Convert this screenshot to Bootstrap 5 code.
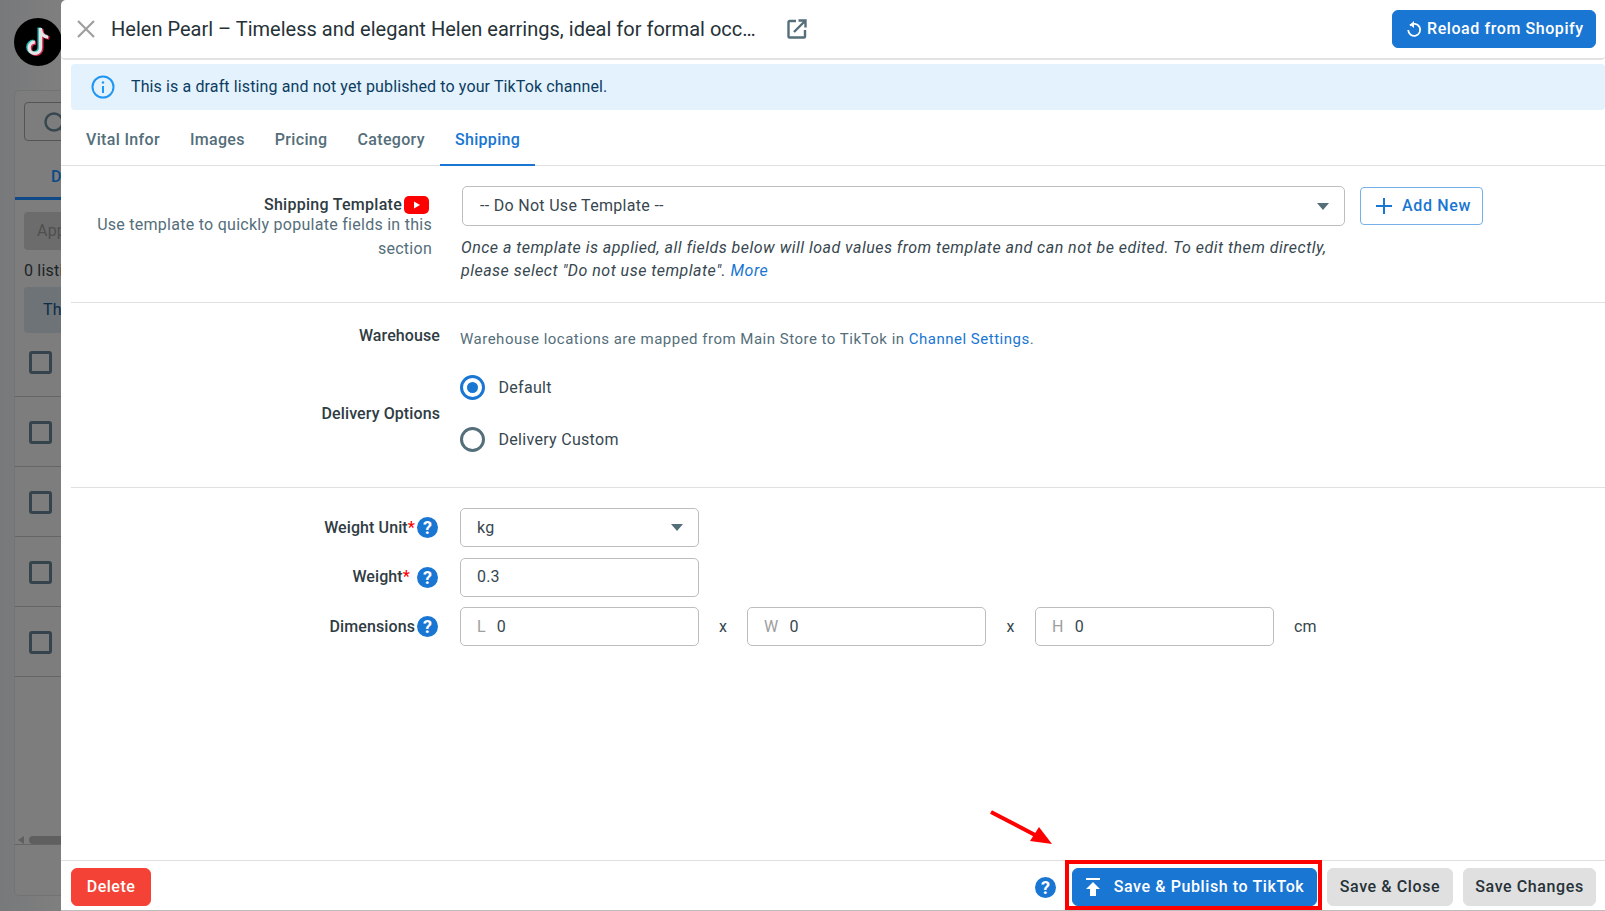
<!doctype html>
<html lang="en">
<head>
<meta charset="utf-8">
<title>Shipping</title>
<link href="https://cdn.jsdelivr.net/npm/bootstrap@5.3.0/dist/css/bootstrap.min.css" rel="stylesheet">
<style>
html,body{height:911px;overflow:hidden}
body{font-family:Roboto,"Liberation Sans",sans-serif;font-size:16px;letter-spacing:.2px;color:#263238;background:#7e7e7e}
.shell{height:911px}
.backdrop{width:61px;flex:none;overflow:hidden;background:linear-gradient(90deg,#77797a,#7f7f7f)}
.tk-logo{width:48px;height:48px;margin:18px 0 24px 14px;background:#000;border-radius:50%}
.tk-logo svg{width:38px;height:38px}
.under-card{margin-left:14px;width:70px;height:806px;background:#7d7d7d;border:1px solid #737373;border-radius:5px;color:#1b2327}
.under-search{margin:11px 0 0 9px;height:39px;border:1px solid #545454;border-radius:4px;padding:8px 0 0 18px}
.under-search svg{width:26px;height:26px}
.under-tab{height:59px;color:#0d4a86;font-weight:500;padding:24px 0 0 36px;border-bottom:3px solid #0e4a87}
.under-btn{margin:12px 0 0 9px;height:38px;background:#6c6c6c;color:#4f4f4f;border-radius:4px;padding:7px 0 0 13px}
.under-count{margin:9px 0 0 9px;height:28px;white-space:nowrap}
.under-alert{margin:0 0 0 9px;height:46px;background:#6d7376;color:#0d2c48;border-radius:4px;padding:11px 0 0 19px}
.under-row{height:70px;border-bottom:1px solid #656565;padding:24px 0 0 14px}
.under-row.lead-row{height:64px;padding-top:18px}
.under-check{width:23px;height:23px;border:3px solid #35444c;border-radius:3px}
.under-scroll{margin-top:158px;height:10px;border-bottom:1px solid #656565;padding-left:3px}
.under-scroll::before{content:"";border-top:4px solid transparent;border-bottom:4px solid transparent;border-right:6px solid #5f5f5f;margin-right:5px}
.under-thumb{height:8px;flex:1;background:#5f5f5f;border-radius:4px 0 0 4px}
.modal-pane{min-width:0;background:#fff;border-radius:5px 0 0 0}
.top-bar{height:60px;flex:none;padding:0 9px 0 15px;border-bottom:2px solid #e3e3e3;border-radius:0 0 4px 4px}
.close-x{width:20px;height:20px;margin-right:15px}
.listing-title{width:646px;font-size:20px;letter-spacing:.01px;color:#263238}
.open-ext{width:20px;height:20px;margin-left:30px;margin-right:auto}
.btn-blue{--bs-btn-bg:#1976d2;--bs-btn-border-color:#1976d2;--bs-btn-color:#fff;--bs-btn-hover-bg:#1976d2;--bs-btn-hover-color:#fff;--bs-btn-font-weight:500;--bs-btn-font-size:16px;--bs-btn-padding-y:0;height:38px}
.reload-btn{width:204px;padding:0 0 0 12px;letter-spacing:.58px}
.reload-btn svg{width:18px;height:18px;margin-right:4px}
.draft-note{height:46px;margin:4px 0 0 10px;padding:0 0 0 20px;background:#e3f2fd;color:#0d3c61;border-radius:4px;letter-spacing:.12px}
.draft-note svg{width:24px;height:24px;margin-right:16px}
.tab-strip{height:56px;padding-left:10px;border-bottom:1px solid #e0e0e0;flex:none}
.tab-strip a{padding:0 15px;height:56px;line-height:59px;color:#546e7a;font-weight:500;text-decoration:none;letter-spacing:.33px}
.tab-strip a.on{color:#1976d2;border-bottom:2px solid #1976d2}
.sec-one{margin-left:10px;height:137px;border-bottom:1px solid #e0e0e0;padding-top:20px}
.lab-wide{width:361px;margin-right:30px;flex:none;text-align:right;color:#546e7a;line-height:23.5px;padding-top:11px;letter-spacing:.27px}
.lab-wide strong{font-weight:500;color:#2f3c43;display:flex;justify-content:flex-end;align-items:center;height:16px;letter-spacing:.27px}
.lab-wide svg{width:25px;height:18px;margin-left:2px;margin-right:3px}
.pick{height:40px;border:1px solid #bdbdbd;border-radius:5px;padding:0 17px;display:flex;align-items:center;justify-content:space-between;color:#37474f;letter-spacing:.3px}
.pick::after{content:"";border-left:6.500px solid transparent;border-right:6.500px solid transparent;border-top:7px solid #546e7a;margin-right:-2px}
.pick-wide{width:883px}
.add-btn{width:123px;height:38px;margin:1px 0 0 15px;border:1px solid #75b0e8;border-radius:4px;background:#fff;color:#1976d2;font-weight:500;padding:0 0 0 4px;letter-spacing:.64px}
.add-btn svg{width:16px;height:16px;margin-right:10px}
.hint-it{width:880px;font-style:italic;color:#37474f;line-height:23px;margin:10px 0 0 -1px;letter-spacing:.48px}
a.lnk{color:#1976d2;text-decoration:none}
.sec-two{margin-left:10px;height:185px;border-bottom:1px solid #e0e0e0}
.lab-col{width:369px;margin-right:20px;flex:none;text-align:right;font-weight:500;color:#2f3c43;letter-spacing:.1px}
.wh-line{padding-top:21px;height:72px}
.wh-note{font-size:15px;color:#546e7a;padding-top:4px;letter-spacing:.5px}
.deliv{height:112px}
.deliv-lab{padding-bottom:34px}
.radio-set{gap:27px;margin-left:-.5px}
.radio-line{height:25px;color:#37474f;letter-spacing:.3px}
.fake-radio{width:25px;height:25px;border-radius:50%;border:3px solid #546e7a;margin-right:14px;flex:none;background:#fff}
.fake-radio.sel{border-color:#1976d2;padding:4px}
.fake-radio.sel i{display:block;width:11px;height:11px;border-radius:50%;background:#1976d2}
.form-zone{margin-left:10px;padding-top:20px;gap:10.5px}
.fld-line{height:39px}
.lab-form{display:flex;justify-content:flex-end;align-items:center;gap:2px;width:367px;margin-right:22px}
.req{color:#f00}
.qmark{width:21px;height:21px;border-radius:50%;background:#1976d2;color:#fff;font-weight:700;font-size:18px;line-height:21px;text-align:center;letter-spacing:0;flex:none;display:inline-block}
.gap-m{margin-left:5px}
.fld{width:239px;height:39px;border:1px solid #bdbdbd;border-radius:5px;padding:0 16px;display:flex;align-items:center;color:#37474f;letter-spacing:.2px}
.fld.pick{justify-content:space-between}
.fld.pick::after{margin-right:-1px}
.fld .pre{color:#9e9e9e;margin-right:11px}
.times{width:48px;text-align:center;color:#37474f;padding-top:1px}
.times.wider{width:49px}
.unit-cm{margin-left:20px;color:#37474f;padding-top:1px}
.foot-bar{height:50px;flex:none;padding:3px 9px 0 10px;border-top:1px solid #e0e0e0;margin-top:auto}
.del-btn{--bs-btn-bg:#f44336;--bs-btn-border-color:#f44336;--bs-btn-color:#fff;--bs-btn-hover-bg:#f44336;--bs-btn-hover-color:#fff;--bs-btn-font-weight:500;--bs-btn-font-size:16px;--bs-btn-padding-y:0;width:80px;height:38px;letter-spacing:.5px}
.grey-btn{--bs-btn-bg:#e0e0e0;--bs-btn-border-color:#e0e0e0;--bs-btn-color:#263238;--bs-btn-hover-bg:#e0e0e0;--bs-btn-font-weight:500;--bs-btn-font-size:16px;--bs-btn-padding-y:0;--bs-btn-padding-x:0;height:38px;letter-spacing:.6px}
.grey-close{width:126px;margin-right:10px}
.grey-save{width:133px}
.pub-btn{width:245px;padding:0;letter-spacing:.6px}
.pub-btn svg{width:16px;height:18px;margin-right:13px}
.pub-wrap{position:relative;margin:0 10px 0 16px}
.pub-wrap::before{content:"";position:absolute;left:-7px;right:-5px;top:-8px;bottom:-4px;border:4px solid #f00;pointer-events:none}
.pointer{position:absolute;left:-82px;top:-57px;width:62px;height:34px;overflow:visible}
.bot-line{height:1px;background:#bdbdbd}
</style>
</head>
<body>
<div class="shell d-flex">
  <div class="backdrop">
    <div class="tk-logo d-flex align-items-center justify-content-center">
      <svg viewBox="0 0 30 30" aria-hidden="true">
        <path d="M17 4v15.500a4.500 4.500 0 1 1-4.500-4.500M17 5c.4 3.600 2.600 5.800 6 6.200" fill="none" stroke="#20b8b3" stroke-width="2.800" transform="translate(-1 -.5)"/>
        <path d="M17 4v15.500a4.500 4.500 0 1 1-4.500-4.500M17 5c.4 3.600 2.600 5.800 6 6.200" fill="none" stroke="#d02850" stroke-width="2.800" transform="translate(1 .7)"/>
        <path d="M17 4v15.500a4.500 4.500 0 1 1-4.500-4.500M17 5c.4 3.600 2.600 5.800 6 6.200" fill="none" stroke="#e4e4e4" stroke-width="2.600"/>
      </svg>
    </div>
    <div class="under-card">
      <div class="under-search"><svg viewBox="0 0 26 26" fill="none" stroke="#37474f" stroke-width="2.500"><circle cx="11" cy="11" r="8.500"/><path d="M17 17l7 7"/></svg></div>
      <div class="under-tab">D</div>
      <div class="under-btn">App</div>
      <div class="under-count">0 listings</div>
      <div class="under-alert">Th</div>
      <div class="under-row lead-row"><div class="under-check"></div></div>
      <div class="under-row"><div class="under-check"></div></div>
      <div class="under-row"><div class="under-check"></div></div>
      <div class="under-row"><div class="under-check"></div></div>
      <div class="under-row"><div class="under-check"></div></div>
      <div class="under-scroll d-flex align-items-center"><div class="under-thumb"></div></div>
    </div>
  </div>

  <div class="modal-pane flex-grow-1 d-flex flex-column">
    <div class="top-bar d-flex align-items-center">
      <svg class="close-x" viewBox="0 0 20 20" fill="none" stroke="#9e9e9e" stroke-width="2.200"><path d="M2 2l16 16M18 2L2 18"/></svg>
      <div class="listing-title text-truncate">Helen Pearl – Timeless and elegant Helen earrings, ideal for formal occasions</div>
      <svg class="open-ext" viewBox="0 0 20 20" fill="none" stroke="#546e7a" stroke-width="2.400"><path d="M9 2H2.500a1 1 0 0 0-1 1v14.500a1 1 0 0 0 1 1H17a1 1 0 0 0 1-1V11M7 13L18 2M11.500 1.500H18.500V8.500"/></svg>
      <button type="button" class="btn btn-blue reload-btn d-flex align-items-center">
        <svg viewBox="0 0 18 18" fill="none" stroke="#fff" stroke-width="1.800"><path d="M5 5.500A6 6 0 1 1 3.200 10"/><path d="M9 1L5 4.700 9 8z" fill="#fff" stroke="none"/></svg>Reload from Shopify
      </button>
    </div>

    <div class="draft-note d-flex align-items-center">
      <svg viewBox="0 0 24 24" fill="none" stroke="#2196f3" stroke-width="2"><circle cx="12" cy="12" r="10.500"/><path d="M12 11v7"/><circle cx="12" cy="7.500" r="1.200" fill="#2196f3" stroke="none"/></svg>
      <span>This is a draft listing and not yet published to your TikTok channel.</span>
    </div>

    <nav class="tab-strip d-flex">
      <a href="#">Vital Infor</a><a href="#">Images</a><a href="#">Pricing</a><a href="#">Category</a><a href="#" class="on">Shipping</a>
    </nav>

    <section class="sec-one d-flex">
      <div class="lab-wide">
        <strong>Shipping Template<svg viewBox="0 0 25 18"><rect width="25" height="18" rx="5" fill="#f00"/><path d="M10 5.500l6 3.500-6 3.500z" fill="#fff"/></svg></strong>
        Use template to quickly populate fields in this section
      </div>
      <div>
        <div class="d-flex">
          <div class="pick pick-wide">-- Do Not Use Template --</div>
          <button type="button" class="add-btn d-flex align-items-center justify-content-center">
            <svg viewBox="0 0 16 16" stroke="#1976d2" stroke-width="2"><path d="M8 0v16M0 8h16"/></svg>Add New
          </button>
        </div>
        <div class="hint-it">Once a template is applied, all fields below will load values from template and can not be edited. To edit them directly, please select "Do not use template". <a href="#" class="lnk">More</a></div>
      </div>
    </section>

    <section class="sec-two">
      <div class="d-flex wh-line">
        <div class="lab-col">Warehouse</div>
        <div class="wh-note">Warehouse locations are mapped from Main Store to TikTok in <a href="#" class="lnk">Channel Settings</a>.</div>
      </div>
      <div class="d-flex deliv">
        <div class="lab-col align-self-center deliv-lab">Delivery Options</div>
        <div class="d-flex flex-column radio-set">
          <div class="radio-line d-flex align-items-center"><span class="fake-radio sel"><i></i></span>Default</div>
          <div class="radio-line d-flex align-items-center"><span class="fake-radio"></span>Delivery Custom</div>
        </div>
      </div>
    </section>

    <section class="form-zone d-flex flex-column">
      <div class="d-flex align-items-center fld-line">
        <div class="lab-col lab-form"><span>Weight Unit<span class="req">*</span></span><span class="qmark">?</span></div>
        <div class="fld pick">kg</div>
      </div>
      <div class="d-flex align-items-center fld-line">
        <div class="lab-col lab-form"><span>Weight<span class="req">*</span></span><span class="qmark gap-m">?</span></div>
        <div class="fld">0.3</div>
      </div>
      <div class="d-flex align-items-center fld-line">
        <div class="lab-col lab-form"><span>Dimensions</span><span class="qmark">?</span></div>
        <div class="fld"><span class="pre">L</span>0</div>
        <div class="times">x</div>
        <div class="fld"><span class="pre">W</span>0</div>
        <div class="times wider">x</div>
        <div class="fld"><span class="pre">H</span>0</div>
        <div class="unit-cm">cm</div>
      </div>
    </section>

    <div class="foot-bar d-flex align-items-center">
      <button type="button" class="btn del-btn">Delete</button>
      <span class="qmark ms-auto">?</span>
      <div class="pub-wrap">
        <svg class="pointer" viewBox="0 0 62 34" aria-hidden="true"><path d="M1 1L47 25" stroke="#f00" stroke-width="4"/><path d="M62 33L40 30 49 16z" fill="#f00"/></svg>
        <button type="button" class="btn btn-blue pub-btn d-flex align-items-center justify-content-center">
          <svg viewBox="0 0 16 18" fill="#fff"><rect x="1" y="0" width="14" height="2"/><path d="M8 4l7 7h-4v7H5v-7H1z"/></svg>Save &amp; Publish to TikTok
        </button>
      </div>
      <button type="button" class="btn grey-btn grey-close">Save &amp; Close</button>
      <button type="button" class="btn grey-btn grey-save">Save Changes</button>
    </div>
    <div class="bot-line"></div>
  </div>
</div>
<script src="https://cdn.jsdelivr.net/npm/bootstrap@5.3.0/dist/js/bootstrap.bundle.min.js"></script>
</body>
</html>
